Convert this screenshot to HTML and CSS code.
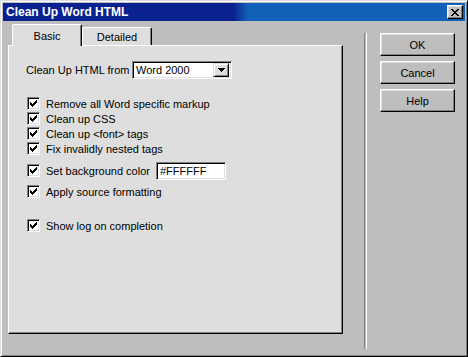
FILE: index.html
```html
<!DOCTYPE html>
<html lang="en">
<head>
    <meta charset="UTF-8">
    <title>Clean Up Word HTML</title>
    <link rel="stylesheet" href="styles.css">
</head>
<body>

<div class="window">
    <div class="title-bar">
        <span class="title-text">Clean Up Word HTML</span>
        <button class="close-btn">
            <svg width="8" height="7" viewBox="0 0 8 7" shape-rendering="crispEdges">
                <path d="M0 0h2v1H0zM6 0h2v1H6zM1 1h2v1H1zM5 1h2v1H5zM2 2h4v1H2zM3 3h2v1H3zM2 4h4v1H2zM1 5h2v1H1zM5 5h2v1H5zM0 6h2v1H0zM6 6h2v1H6z" fill="#000"/>
            </svg>
        </button>
    </div>

    <div class="dialog-body">
        <div class="tab-area">
            <div class="tabs">
                <div class="tab active">Basic</div>
                <div class="tab">Detailed</div>
            </div>
            <div class="tab-panel">
                <div class="from-row">
                    <span class="from-label">Clean Up HTML from</span>
                    <div class="combo">
                        <span class="combo-value">Word 2000</span>
                        <span class="combo-arrow">
                            <svg width="7" height="4" viewBox="0 0 7 4" shape-rendering="crispEdges">
                                <path d="M0 0h7v1H0zM1 1h5v1H1zM2 2h3v1H2zM3 3h1v1H3z" fill="#000"/>
                            </svg>
                        </span>
                    </div>
                </div>

                <div class="check-group">
                    <label class="check-row"><span class="checkbox"><svg width="7" height="7" viewBox="0 0 7 7" shape-rendering="crispEdges"><path d="M0 2h1v3H0zM1 3h1v3H1zM2 4h1v3H2zM3 3h1v3H3zM4 2h1v3H4zM5 1h1v3H5zM6 0h1v3H6z"/></svg></span>Remove all Word specific markup</label>
                    <label class="check-row"><span class="checkbox"><svg width="7" height="7" viewBox="0 0 7 7" shape-rendering="crispEdges"><path d="M0 2h1v3H0zM1 3h1v3H1zM2 4h1v3H2zM3 3h1v3H3zM4 2h1v3H4zM5 1h1v3H5zM6 0h1v3H6z"/></svg></span>Clean up CSS</label>
                    <label class="check-row"><span class="checkbox"><svg width="7" height="7" viewBox="0 0 7 7" shape-rendering="crispEdges"><path d="M0 2h1v3H0zM1 3h1v3H1zM2 4h1v3H2zM3 3h1v3H3zM4 2h1v3H4zM5 1h1v3H5zM6 0h1v3H6z"/></svg></span>Clean up &lt;font&gt; tags</label>
                    <label class="check-row"><span class="checkbox"><svg width="7" height="7" viewBox="0 0 7 7" shape-rendering="crispEdges"><path d="M0 2h1v3H0zM1 3h1v3H1zM2 4h1v3H2zM3 3h1v3H3zM4 2h1v3H4zM5 1h1v3H5zM6 0h1v3H6z"/></svg></span>Fix invalidly nested tags</label>
                </div>

                <label class="check-row bg-row"><span class="checkbox"><svg width="7" height="7" viewBox="0 0 7 7" shape-rendering="crispEdges"><path d="M0 2h1v3H0zM1 3h1v3H1zM2 4h1v3H2zM3 3h1v3H3zM4 2h1v3H4zM5 1h1v3H5zM6 0h1v3H6z"/></svg></span>Set background color<span class="text-field">#FFFFFF</span></label>
                <label class="check-row apply-row"><span class="checkbox"><svg width="7" height="7" viewBox="0 0 7 7" shape-rendering="crispEdges"><path d="M0 2h1v3H0zM1 3h1v3H1zM2 4h1v3H2zM3 3h1v3H3zM4 2h1v3H4zM5 1h1v3H5zM6 0h1v3H6z"/></svg></span>Apply source formatting</label>
                <label class="check-row log-row"><span class="checkbox"><svg width="7" height="7" viewBox="0 0 7 7" shape-rendering="crispEdges"><path d="M0 2h1v3H0zM1 3h1v3H1zM2 4h1v3H2zM3 3h1v3H3zM4 2h1v3H4zM5 1h1v3H5zM6 0h1v3H6z"/></svg></span>Show log on completion</label>
            </div>
        </div>

        <div class="separator"></div>

        <div class="buttons">
            <button class="btn">OK</button>
            <button class="btn">Cancel</button>
            <button class="btn">Help</button>
        </div>
    </div>
</div>

</body>
</html>
```

FILE: styles.css
```css
body {
    margin: 0;
    background-color: #bebebe;
    font-family: "Liberation Sans", Arial, sans-serif;
    font-size: 11px;
    color: #000;
}

.window {
    width: 468px;
    height: 357px;
    box-sizing: border-box;
    padding: 1px;
    background-color: #bebebe;
    border: 1px solid;
    border-color: #dedede #000 #000 #dedede;
    box-shadow: inset 1px 1px #fff, inset -1px -1px #808080;
}

.title-bar {
    height: 18px;
    margin: 1px 1px 0 1px;
    display: flex;
    align-items: center;
    justify-content: space-between;
    padding: 0 2px 0 3px;
    background: linear-gradient(to right, #0a2290 0, #0a2290 50%, #1062b8 53%, #1062b8 100%);
}

.title-text {
    color: #fff;
    font-weight: bold;
    font-size: 12px;
}

.close-btn {
    width: 16px;
    height: 14px;
    padding: 0;
    display: flex;
    align-items: center;
    justify-content: center;
    background-color: #bebebe;
    border: 1px solid;
    border-color: #fff #000 #000 #fff;
    box-shadow: inset -1px -1px #808080, inset 1px 1px #dedede;
}

.dialog-body {
    display: flex;
    padding-left: 6px;
}

/* tabs + panel */
.tab-area {
    width: 335px;
    padding-top: 3px;
}

.tabs {
    display: flex;
    align-items: flex-end;
    height: 21px;
    padding-left: 4px;
}

.tab {
    width: 70px;
    height: 18px;
    box-sizing: border-box;
    display: flex;
    align-items: center;
    justify-content: center;
    background-color: #dedede;
    border: 1px solid #fff;
    border-bottom: none;
    border-right-color: #000;
    border-radius: 2px 2px 0 0;
    box-shadow: inset -1px 0 #808080;
}

.tab.active {
    width: 70px;
    height: 22px;
    margin-bottom: -1px;
    position: relative;
    z-index: 1;
}

.tab-panel {
    height: 289px;
    box-sizing: border-box;
    padding: 15px 0 0 17px;
    background-color: #dedede;
    border: 1px solid;
    border-color: #fff #000 #000 #fff;
    box-shadow: inset -1px -1px #808080;
}

.from-row {
    display: flex;
    align-items: center;
    height: 18px;
}

.from-label {
    width: 106px;
}

.combo {
    width: 100px;
    height: 18px;
    box-sizing: border-box;
    display: flex;
    align-items: center;
    justify-content: space-between;
    background-color: #fff;
    border: 1px solid;
    border-color: #808080 #fff #fff #808080;
    box-shadow: inset 1px 1px #000, inset -1px -1px #dedede;
    padding: 0 2px 0 3px;
}

.combo-arrow {
    width: 16px;
    height: 14px;
    box-sizing: border-box;
    display: flex;
    align-items: center;
    justify-content: center;
    background-color: #dedede;
    border: 1px solid;
    border-color: #dedede #000 #000 #dedede;
    box-shadow: inset 1px 1px #fff, inset -1px -1px #808080;
}

.check-group {
    margin-top: 17px;
    display: flex;
    flex-direction: column;
}

.check-row {
    display: flex;
    align-items: center;
    height: 15px;
}

.checkbox {
    width: 13px;
    height: 13px;
    box-sizing: border-box;
    margin: 0 6px 0 1px;
    display: flex;
    align-items: center;
    justify-content: center;
    background-color: #fff;
    border: 1px solid;
    border-color: #808080 #fff #fff #808080;
    box-shadow: inset 1px 1px #000, inset -1px -1px #dedede;
}

.bg-row {
    height: 19px;
    margin-top: 5px;
}

.text-field {
    width: 70px;
    height: 18px;
    box-sizing: border-box;
    margin-left: 6px;
    align-self: flex-end;
    padding: 2px 0 0 3px;
    background-color: #fff;
    border: 1px solid;
    border-color: #808080 #fff #fff #808080;
    box-shadow: inset 1px 1px #000, inset -1px -1px #dedede;
}

.apply-row {
    margin-top: 4px;
}

.log-row {
    margin-top: 19px;
}

.separator {
    width: 1px;
    height: 316px;
    margin: 12px 0 0 21px;
    border-left: 1px solid #808080;
    border-right: 1px solid #fff;
}

.buttons {
    display: flex;
    flex-direction: column;
    gap: 5px;
    margin: 12px 0 0 13px;
}

.btn {
    width: 75px;
    height: 23px;
    padding: 0;
    font-family: "Liberation Sans", Arial, sans-serif;
    font-size: 11px;
    color: #000;
    background-color: #bebebe;
    border: 1px solid;
    border-color: #fff #000 #000 #fff;
    box-shadow: inset -1px -1px #808080, inset 1px 1px #dedede;
}
```
